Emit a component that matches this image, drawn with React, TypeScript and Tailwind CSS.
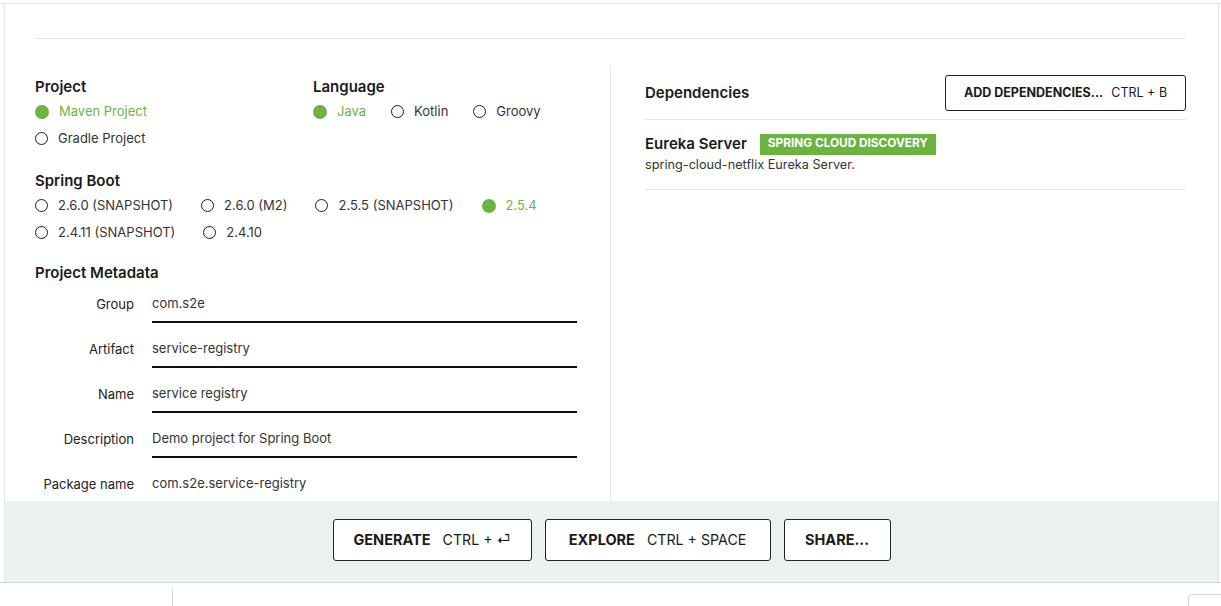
import React from 'react'

const GREEN = '#6db33f'

function Radio({ label, checked }: { label: string; checked?: boolean }) {
  return (
    <div className="flex items-center h-[27px]">
      {checked ? (
        <span className="w-[14px] h-[14px] rounded-full bg-[#6db33f] shrink-0" />
      ) : (
        <span className="w-[13px] h-[13px] rounded-full border-[1.5px] border-[#1a1a1a] shrink-0" />
      )}
      <span className={`ml-[10px] text-[13px] whitespace-nowrap ${checked ? 'text-[#6db33f]' : 'text-[#333]'}`}>
        {label}
      </span>
    </div>
  )
}

function Heading({ children }: { children: React.ReactNode }) {
  return <div className="text-[15px] font-semibold text-[#1a1a1a] leading-[20px]">{children}</div>
}

const META = [
  { label: 'Group', value: 'com.s2e' },
  { label: 'Artifact', value: 'service-registry' },
  { label: 'Name', value: 'service registry' },
  { label: 'Description', value: 'Demo project for Spring Boot' },
  { label: 'Package name', value: 'com.s2e.service-registry' },
]

function Button({ main, hint, className }: { main: string; hint?: string; className?: string }) {
  return (
    <button
      className={`h-[42px] bg-white border border-[#222] rounded-[3px] flex items-center justify-center whitespace-nowrap text-[#1a1a1a] ${className || ''}`}
    >
      <span className="font-bold text-[14.5px]">{main}</span>
      {hint && <span className="ml-[12px] text-[14.2px]">{hint}</span>}
    </button>
  )
}

export default function App() {
  return (
    <div className="w-[1221px] h-[606px] bg-white overflow-hidden" style={{ fontFamily: 'Inter, "Noto Sans", sans-serif' }}>
      <div className="mt-[3px] border-t border-[#e1e5e5]">
        <div className="ml-[4px] w-[1215px] border-l border-r border-[#dfe6e6]">
          <div className="h-[497px] overflow-hidden">
            <div className="pl-[30px] pr-[32px]">
              <div className="h-[35px] border-b border-[#dfe6e6]" />
              <div className="flex mt-[27px]">
                {/* left column */}
                <div className="w-[575px] pt-[11px] pr-[33px]">
                  <div className="flex">
                    <div className="w-[278px]">
                      <Heading>Project</Heading>
                      <div className="mt-[1px]">
                        <Radio label="Maven Project" checked />
                        <Radio label="Gradle Project" />
                      </div>
                    </div>
                    <div>
                      <Heading>Language</Heading>
                      <div className="mt-[1px] flex gap-x-[25px]">
                        <Radio label="Java" checked />
                        <Radio label="Kotlin" />
                        <Radio label="Groovy" />
                      </div>
                    </div>
                  </div>

                  <div className="mt-[19px]">
                    <Heading>Spring Boot</Heading>
                    <div className="mt-[1px] flex gap-x-[28px]">
                      <Radio label="2.6.0 (SNAPSHOT)" />
                      <Radio label="2.6.0 (M2)" />
                      <Radio label="2.5.5 (SNAPSHOT)" />
                      <Radio label="2.5.4" checked />
                    </div>
                    <div className="flex gap-x-[28px]">
                      <Radio label="2.4.11 (SNAPSHOT)" />
                      <Radio label="2.4.10" />
                    </div>
                  </div>

                  <div className="mt-[17px]">
                    <Heading>Project Metadata</Heading>
                    <div className="mt-[4px] flex flex-col gap-y-[9px]">
                      {META.map((m) => (
                        <div key={m.label} className="flex items-center">
                          <div className="w-[99px] text-right text-[13px] text-[#222] whitespace-nowrap">{m.label}</div>
                          <div className="ml-[18px] flex-1 h-[36px] border-b-2 border-[#111] flex items-center text-[13px] text-[#333]">
                            {m.value}
                          </div>
                        </div>
                      ))}
                    </div>
                  </div>
                </div>

                {/* right column */}
                <div className="flex-1 border-l border-[#dfe6e6] pl-[34px] pt-[9px] h-[440px]">
                  <div className="flex items-center justify-between h-[36px]">
                    <div className="text-[15px] font-semibold text-[#1a1a1a]">Dependencies</div>
                    <button className="h-[36px] w-[241px] border border-[#222] rounded-[3px] bg-white flex items-center justify-center whitespace-nowrap text-[12.5px] text-[#1a1a1a]">
                      <span className="font-bold">ADD DEPENDENCIES...</span>
                      <span className="ml-[8px]">CTRL + B</span>
                    </button>
                  </div>
                  <div className="mt-[8px] border-t border-[#dfe6e6]" />
                  <div className="pt-[13px] pb-[15px] border-b border-[#dfe6e6]">
                    <div className="flex items-center h-[22px]">
                      <span className="text-[15px] font-semibold text-[#1a1a1a]">Eureka Server</span>
                      <span
                        className="ml-[13px] h-[21px] px-[8px] flex items-center text-[11.8px] font-bold text-white"
                        style={{ backgroundColor: GREEN }}
                      >
                        SPRING CLOUD DISCOVERY
                      </span>
                    </div>
                    <div className="mt-[1px] text-[12.7px] text-[#333] leading-[18px]">spring-cloud-netflix Eureka Server.</div>
                  </div>
                </div>
              </div>
            </div>
          </div>

          {/* bottom bar */}
          <div className="h-[81px] bg-[#ebf0f0] flex justify-center pt-[18px] gap-x-[13px]">
            <Button main="GENERATE" hint="CTRL + ⏎" className="w-[199px]" />
            <Button main="EXPLORE" hint="CTRL + SPACE" className="w-[226px]" />
            <Button main="SHARE..." className="w-[107px]" />
          </div>
        </div>
        <div className="border-t border-[#d3d8da]" />
        <div className="relative h-[23px]">
          <div className="absolute left-[172px] top-[6px] bottom-0 border-l border-[#cfcfcf]" />
          <div className="absolute left-[1188px] top-[11px] w-[40px] h-[20px] border border-[#d6d6d6] rounded-[4px] bg-white" />
        </div>
      </div>
    </div>
  )
}
